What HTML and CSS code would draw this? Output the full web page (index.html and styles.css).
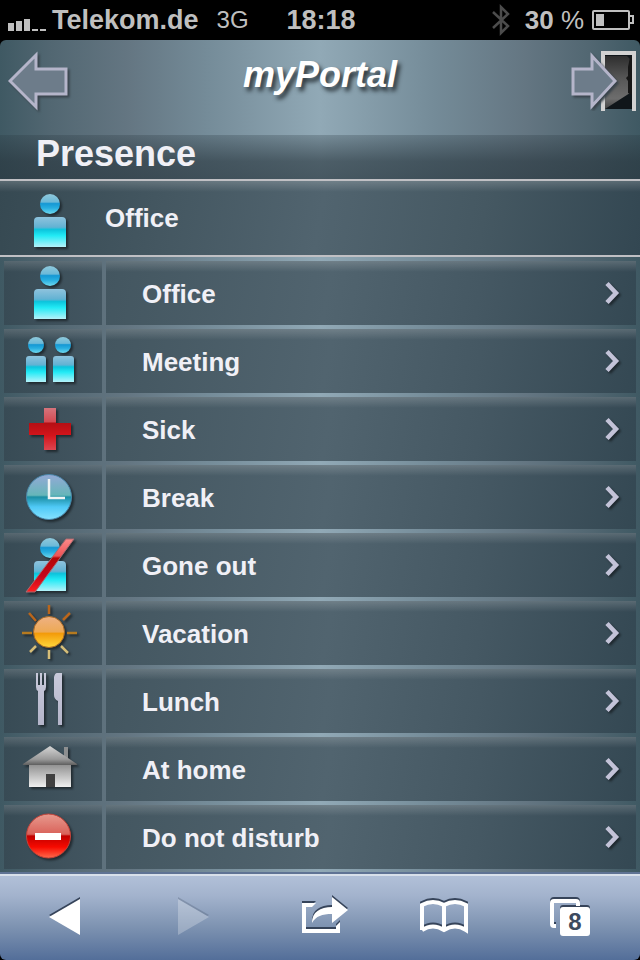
FILE: index.html
```
<!DOCTYPE html>
<html lang="en">
<head>
  <meta charset="UTF-8">
  <meta name="viewport" content="width=device-width, initial-scale=1.0">
  <title>myPortal - Presence</title>
  <link rel="stylesheet" href="styles.css">
</head>
<body>
  <!-- Shared gradients and symbols -->
  <svg class="defs" width="0" height="0" aria-hidden="true">
    <defs>
      <linearGradient id="headFill" x1="0" y1="0" x2="0" y2="1">
        <stop offset="0" stop-color="#8fc9dc"/>
        <stop offset=".4" stop-color="#6cb9d8"/>
        <stop offset=".48" stop-color="#1598d4"/>
        <stop offset=".7" stop-color="#27aee0"/>
        <stop offset="1" stop-color="#6fd8ee"/>
      </linearGradient>
      <linearGradient id="bodyFill" x1="0" y1="0" x2="0" y2="1">
        <stop offset="0" stop-color="#8fc3dd"/>
        <stop offset=".34" stop-color="#62b2d3"/>
        <stop offset=".42" stop-color="#0cc4dc"/>
        <stop offset=".62" stop-color="#22eaf5"/>
        <stop offset="1" stop-color="#b4f2fa"/>
      </linearGradient>
      <linearGradient id="crossFill" gradientUnits="userSpaceOnUse" x1="0" y1="11" x2="0" y2="53">
        <stop offset="0" stop-color="#d6747c"/>
        <stop offset=".33" stop-color="#d34a52"/>
        <stop offset=".36" stop-color="#b50f14"/>
        <stop offset=".65" stop-color="#d3141b"/>
        <stop offset="1" stop-color="#dc4650"/>
      </linearGradient>
      <linearGradient id="clockFill" x1="0" y1="0" x2="0" y2="1">
        <stop offset="0" stop-color="#94a9d6"/>
        <stop offset=".46" stop-color="#66b6b9"/>
        <stop offset=".5" stop-color="#1b8ea3"/>
        <stop offset=".72" stop-color="#4fc9f6"/>
        <stop offset="1" stop-color="#86e2ff"/>
      </linearGradient>
      <linearGradient id="slashFill" x1="0" y1="0" x2="0" y2="1">
        <stop offset="0" stop-color="#fb8a8a"/>
        <stop offset=".32" stop-color="#ee5356"/>
        <stop offset=".36" stop-color="#b40606"/>
        <stop offset=".7" stop-color="#c5061a"/>
        <stop offset="1" stop-color="#ff2020"/>
      </linearGradient>
      <linearGradient id="sunFill" x1="0" y1="0" x2="0" y2="1">
        <stop offset="0" stop-color="#eeb184"/>
        <stop offset=".5" stop-color="#eda954"/>
        <stop offset=".54" stop-color="#f39a08"/>
        <stop offset="1" stop-color="#ffd83c"/>
      </linearGradient>
      <linearGradient id="metalFill" x1="0" y1="0" x2="0" y2="1">
        <stop offset="0" stop-color="#c9cadb"/>
        <stop offset="1" stop-color="#b4b5ca"/>
      </linearGradient>
      <linearGradient id="roofFill" x1="0" y1="0" x2="0" y2="1">
        <stop offset="0" stop-color="#d5d5d5"/>
        <stop offset=".7" stop-color="#999"/>
        <stop offset="1" stop-color="#5e5e5e"/>
      </linearGradient>
      <linearGradient id="wallFill" x1="0" y1="0" x2="0" y2="1">
        <stop offset="0" stop-color="#8a8a8a"/>
        <stop offset="1" stop-color="#efefef"/>
      </linearGradient>
      <linearGradient id="stopFill" x1="0" y1="0" x2="0" y2="1">
        <stop offset="0" stop-color="#e89a8e"/>
        <stop offset=".46" stop-color="#d9625a"/>
        <stop offset=".5" stop-color="#c00000"/>
        <stop offset=".75" stop-color="#f60a00"/>
        <stop offset="1" stop-color="#ff6a4c"/>
      </linearGradient>
      <linearGradient id="doorFill" x1="0" y1="0" x2="0" y2="1">
        <stop offset="0" stop-color="#2e2e2e"/>
        <stop offset=".4" stop-color="#555"/>
        <stop offset=".8" stop-color="#6d6d6d"/>
        <stop offset="1" stop-color="#444"/>
      </linearGradient>
      <symbol id="person" viewBox="0 0 98 64">
        <circle cx="46" cy="15" r="10" fill="url(#headFill)"/>
        <path d="M30 58V32q0-4 4-4h24q4 0 4 4v26z" fill="url(#bodyFill)"/>
      </symbol>
      <symbol id="chevron" viewBox="0 0 16 26">
        <path d="M2 2.500L11 12L2 21.500" fill="none" stroke="#c3c3d8" stroke-width="4.500"/>
      </symbol>
    </defs>
  </svg>

  <div class="status-bar">
    <div class="carrier">
      <svg width="39" height="14" viewBox="0 0 39 14" fill="#bfbfbf" aria-hidden="true">
        <path d="M0 6h6v8H0zM8 4h6v10H8zM16 2h6v12h-6zM24 12h6v2h-6zM32 12h6v2h-6z"/>
      </svg>
      <span>Telekom.de</span>
      <span class="network">3G</span>
    </div>
    <div class="clock">18:18</div>
    <div class="battery">
      <svg width="18" height="32" viewBox="0 0 18 32" fill="none" stroke="#4c4c4c" stroke-width="2.500" aria-hidden="true">
        <path d="M1 8l15 14-7 7V3l7 7L1 24"/>
      </svg>
      <span>30 <span class="percent">%</span></span>
      <svg width="42" height="20" viewBox="0 0 42 20" aria-hidden="true">
        <rect x="1" y="1" width="36" height="18" rx="1" fill="none" stroke="#bfbfbf" stroke-width="2"/>
        <path d="M4 4h8v12H4z" fill="#bfbfbf"/>
        <path d="M38 6h3v7h-3" fill="none" stroke="#bfbfbf" stroke-width="2"/>
      </svg>
    </div>
  </div>

  <main>
    <header>
      <a href="#" class="nav-arrow" aria-label="Back">
        <svg class="shadow" width="62" height="60" viewBox="0 0 62 60" aria-hidden="true">
          <path d="M2 30L28 4v14h30v25H28v13z" fill="#6d7c8a" stroke="#b5b5ca" stroke-width="3"/>
        </svg>
      </a>
      <h1>myPortal</h1>
      <a href="#" class="nav-arrow" aria-label="Log out">
        <svg width="66" height="60" viewBox="0 0 66 60" aria-hidden="true">
          <path d="M31 0h35v60h-4V4H35v56h-4z" fill="#d2d2d2"/>
          <path d="M35 4h27v54H35z" fill="#10161a"/>
          <path d="M35 5h22l3 3v34L35 58z" fill="url(#doorFill)"/>
          <path d="M60 6l-2 10v9l-2 2 2 3v12l4 2V6z" fill="#161616"/>
          <path class="shadow" d="M3 18h19V5l23 25-23 25V43H3z" fill="#6d7c8a" stroke="#b5b5ca" stroke-width="3"/>
        </svg>
      </a>
    </header>

    <h2>Presence</h2>

    <div class="current">
      <svg class="icon" width="98" height="64" aria-hidden="true"><use href="#person"/></svg>
      <span>Office</span>
    </div>

    <ul class="presence-list">
      <li><a href="#">
        <span class="cell-icon"><svg class="icon" width="98" height="64" aria-hidden="true"><use href="#person"/></svg></span>
        <span class="cell-label">Office <svg class="chevron" width="16" height="26" aria-hidden="true"><use href="#chevron"/></svg></span>
      </a></li>
      <li><a href="#">
        <span class="cell-icon">
          <svg class="icon" width="98" height="64" viewBox="0 0 98 64" aria-hidden="true">
            <circle cx="32" cy="16" r="8" fill="url(#headFill)"/>
            <path d="M22 53V30q0-3 3-3h14q3 0 3 3v23z" fill="url(#bodyFill)"/>
            <circle cx="59" cy="16" r="8" fill="url(#headFill)"/>
            <path d="M49 53V30q0-3 3-3h15q3 0 3 3v23z" fill="url(#bodyFill)"/>
          </svg>
        </span>
        <span class="cell-label">Meeting <svg class="chevron" width="16" height="26" aria-hidden="true"><use href="#chevron"/></svg></span>
      </a></li>
      <li><a href="#">
        <span class="cell-icon">
          <svg class="icon" width="98" height="64" viewBox="0 0 98 64" aria-hidden="true">
            <path d="M40 11h12v15h15v12H52v15H40V38H25V26h15z" fill="url(#crossFill)"/>
          </svg>
        </span>
        <span class="cell-label">Sick <svg class="chevron" width="16" height="26" aria-hidden="true"><use href="#chevron"/></svg></span>
      </a></li>
      <li><a href="#">
        <span class="cell-icon">
          <svg class="icon" width="98" height="64" viewBox="0 0 98 64" aria-hidden="true">
            <circle cx="45" cy="32" r="22.500" fill="url(#clockFill)" stroke="#4a86a8" stroke-width="1"/>
            <path d="M45 14v19h16" fill="none" stroke="#eef4f4" stroke-width="2.500"/>
          </svg>
        </span>
        <span class="cell-label">Break <svg class="chevron" width="16" height="26" aria-hidden="true"><use href="#chevron"/></svg></span>
      </a></li>
      <li><a href="#">
        <span class="cell-icon">
          <svg class="icon" width="98" height="64" viewBox="0 0 98 64" aria-hidden="true">
            <use href="#person" width="98" height="64"/>
            <path d="M22 59h9L70 6h-8z" fill="url(#slashFill)" stroke="#a96a70" stroke-width="1"/>
          </svg>
        </span>
        <span class="cell-label">Gone out <svg class="chevron" width="16" height="26" aria-hidden="true"><use href="#chevron"/></svg></span>
      </a></li>
      <li><a href="#">
        <span class="cell-icon">
          <svg class="icon" width="98" height="64" viewBox="0 0 98 64" aria-hidden="true">
            <g fill="none" stroke-width="2.500">
              <path d="M45 4v9M25 12l7 8M66 12l-7 7" stroke="#b9661c"/>
              <path d="M18 32h10M63 32h10" stroke="#b57a20"/>
              <path d="M45 49v9M26 51l6-6M64 52l-7-7" stroke="#d5bd78"/>
            </g>
            <circle cx="45" cy="31" r="15.500" fill="url(#sunFill)" stroke="#a86a28" stroke-width="1"/>
          </svg>
        </span>
        <span class="cell-label">Vacation <svg class="chevron" width="16" height="26" aria-hidden="true"><use href="#chevron"/></svg></span>
      </a></li>
      <li><a href="#">
        <span class="cell-icon">
          <svg class="icon" width="98" height="64" viewBox="0 0 98 64" aria-hidden="true">
            <path d="M32 4h2v12h2V4h2v12h2V4h2v14q0 3-2 4v34h-6V22q-2-1-2-4z" fill="url(#metalFill)"/>
            <path d="M53 4h5v52h-4V32q-4-2-4-6V8q1-4 3-4z" fill="url(#metalFill)"/>
          </svg>
        </span>
        <span class="cell-label">Lunch <svg class="chevron" width="16" height="26" aria-hidden="true"><use href="#chevron"/></svg></span>
      </a></li>
      <li><a href="#">
        <span class="cell-icon">
          <svg class="icon" width="98" height="64" viewBox="0 0 98 64" aria-hidden="true">
            <path d="M60 10h4v14h-4z" fill="#8d8f90"/>
            <path d="M25 26h42v24H25z" fill="url(#wallFill)"/>
            <path d="M46 9L73 27q1 1-1 1H20q-2 0-1-1z" fill="url(#roofFill)"/>
            <path d="M42 37h9v13h-9z" fill="#404040"/>
          </svg>
        </span>
        <span class="cell-label">At home <svg class="chevron" width="16" height="26" aria-hidden="true"><use href="#chevron"/></svg></span>
      </a></li>
      <li><a href="#">
        <span class="cell-icon">
          <svg class="icon" width="98" height="64" viewBox="0 0 98 64" aria-hidden="true">
            <circle cx="44.500" cy="31" r="22" fill="url(#stopFill)" stroke="#c4443a" stroke-width="1"/>
            <path d="M31 28h26v7H31z" fill="#fff"/>
          </svg>
        </span>
        <span class="cell-label">Do not disturb <svg class="chevron" width="16" height="26" aria-hidden="true"><use href="#chevron"/></svg></span>
      </a></li>
    </ul>
  </main>

  <!-- Browser toolbar -->
  <footer>
    <nav class="toolbar">
      <button type="button" aria-label="Previous page">
        <svg width="64" height="44" viewBox="0 0 64 44" aria-hidden="true"><path d="M17 22L48 4v36z" fill="#fff"/></svg>
      </button>
      <button type="button" aria-label="Next page" disabled>
        <svg width="64" height="44" viewBox="0 0 64 44" aria-hidden="true"><path d="M49 22L18 4v36z" fill="#fff"/></svg>
      </button>
      <button type="button" aria-label="Share">
        <svg width="64" height="44" viewBox="0 0 64 44" aria-hidden="true">
          <path d="M28 8H14v30h38V27l-4 4v3H18V12h6z" fill="#fff"/>
          <path d="M24 28c0-11 8-16 20-16V2l16 13-16 13v-9c-10 0-16 2-20 9z" fill="#fff"/>
        </svg>
      </button>
      <button type="button" aria-label="Bookmarks">
        <svg width="64" height="44" viewBox="0 0 64 44" aria-hidden="true">
          <path d="M6 35V10Q17 4 28 10Q39 4 50 10V35Q39 28 28 35Q17 28 6 35M28 10v25" fill="none" stroke="#fff" stroke-width="4"/>
        </svg>
      </button>
      <button type="button" aria-label="Open pages" class="tabs">
        <svg width="64" height="44" viewBox="0 0 64 44" aria-hidden="true">
          <path d="M12 31h-2q-2 0-2-2V8q0-2 2-2h22q2 0 2 2v3" fill="none" stroke="#fff" stroke-width="4"/>
          <rect x="16" y="12" width="30" height="29" rx="3" fill="#fff"/>
        </svg>
        <span class="tab-count">8</span>
      </button>
    </nav>
  </footer>
</body>
</html>
```
FILE: styles.css
```
* {
  box-sizing: border-box;
}

body {
  margin: 0;
  min-height: 100vh;
  display: flex;
  flex-direction: column;
  background-color: #000;
  color: #f0f0f6;
  font-family: "Liberation Sans", Arial, sans-serif;
  font-weight: bold;
  font-size: 26px;
  line-height: 32px;
}

svg {
  display: block;
}

.defs {
  position: absolute;
}

/* Status bar */
.status-bar {
  display: grid;
  grid-template-columns: 1fr auto 1fr;
  align-items: center;
  height: 40px;
  padding: 0 6px 0 8px;
  color: #bfbfbf;
}

.carrier,
.battery {
  display: flex;
  align-items: center;
}

.carrier,
.clock {
  font-size: 27px;
}

.carrier svg {
  margin: 8px 5px 0 0;
}

.network {
  margin-left: 18px;
  font-size: 24px;
  font-weight: normal;
}

.battery {
  justify-content: flex-end;
  gap: 8px;
}

.battery span {
  margin-left: 7px;
}

.battery .percent {
  margin-left: 0;
  font-weight: normal;
}

/* Page */
main {
  flex: 1;
  border-radius: 6px 6px 0 0;
  background: linear-gradient(to right, #3f5963 0%, #526772 8%, #647682 20%, #748b98 32%, #91a9b6 50%, #748b98 68%, #647682 82%, #526772 92%, #3f5963 100%);
}

header {
  display: flex;
  justify-content: space-between;
  align-items: flex-start;
  height: 95px;
  padding: 11px 4px 0 8px;
}

h1 {
  margin: 4px 0 0;
  color: #fff;
  font-size: 36px;
  font-style: italic;
  line-height: 40px;
  text-shadow: 3px 4px 4px #2c363c;
}

.shadow {
  filter: drop-shadow(2px 2px 1px #38424a);
}

h2 {
  margin: 0;
  padding: 1px 36px 7px;
  font-size: 36px;
  line-height: 36px;
  background: linear-gradient(rgba(40, 54, 62, 0.25), rgba(40, 54, 62, 0.65) 60%, rgba(40, 54, 62, 0.7));
}

.current,
.cell-icon,
.cell-label {
  display: flex;
  align-items: center;
}

.current {
  height: 78px;
  padding-left: 4px;
  border-top: 2px solid #c0c0c4;
  border-bottom: 2px solid #c0c0c4;
  background:
    linear-gradient(rgba(255, 255, 255, 0.18), rgba(255, 255, 255, 0) 11px),
    linear-gradient(100deg, #364952, #51646f 50%, #455862 75%, #334752);
}

.current .icon {
  margin: 6px 3px 0 0;
}

.presence-list {
  list-style-type: none;
  margin: 0;
  padding: 4px 4px 3px;
  display: flex;
  flex-direction: column;
  gap: 4px;
}

.presence-list a {
  display: flex;
  gap: 4px;
  color: inherit;
  text-decoration: none;
}

.cell-icon {
  background:
    linear-gradient(rgba(255, 255, 255, 0.16), rgba(255, 255, 255, 0) 11px),
    linear-gradient(to right, #384b55, #435661);
}

.cell-label {
  flex: 1;
  justify-content: space-between;
  padding: 2px 15px 0 36px;
  background:
    linear-gradient(rgba(255, 255, 255, 0.18), rgba(255, 255, 255, 0) 11px),
    linear-gradient(100deg, #435660, #51646f 42%, #455863 70%, #344853);
}

.icon,
.chevron {
  filter: drop-shadow(2px 2px 1px rgba(20, 26, 30, 0.7));
}

/* Toolbar */
.toolbar {
  display: flex;
  justify-content: space-around;
  align-items: center;
  height: 88px;
  border-top: 2px solid #5f7394;
  border-radius: 0 0 6px 6px;
  background: linear-gradient(#d8e0ea 2px, #b1c0d8 2px, #a3b3cd 25%, #7f94b2 60%, #536e99);
}

.toolbar button {
  padding: 0;
  border: 0;
  background: none;
}

.toolbar svg {
  filter: drop-shadow(0 -2px 0 #36445a);
}

.toolbar button:disabled {
  opacity: 0.25;
}

.tabs {
  position: relative;
}

.tab-count {
  position: absolute;
  left: 16px;
  top: 12px;
  width: 30px;
  color: #3c4a5e;
  font-family: "Liberation Sans", Arial, sans-serif;
  font-size: 24px;
  font-weight: bold;
  line-height: 30px;
  text-align: center;
}
```
